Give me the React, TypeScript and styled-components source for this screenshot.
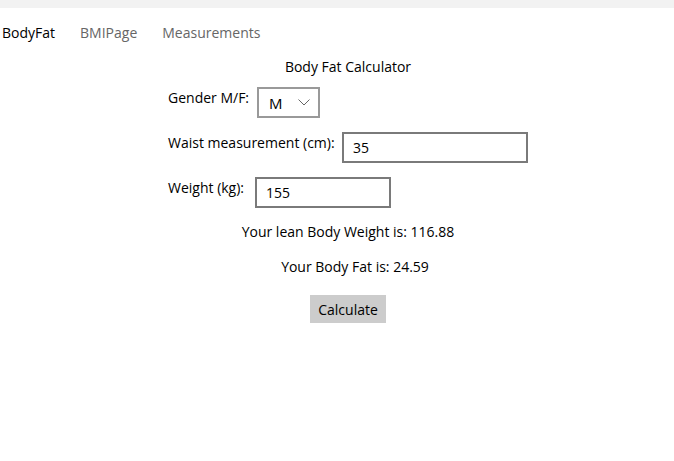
import React from "react";
import styled, { createGlobalStyle } from "styled-components";

const Global = createGlobalStyle`
  html, body { margin: 0; padding: 0; background: #fff; }
  body { font-family: "Open Sans", "Noto Sans", sans-serif; font-size: 14px; color: #000; }
`;

const TopStrip = styled.div`
  height: 8px;
  background: #f2f2f2;
`;

const Tabs = styled.nav`
  display: flex;
  gap: 25px;
  padding: 14px 0 0 2px;
  height: 22px;
`;

const Tab = styled.span<{ $active?: boolean }>`
  font-size: 14px;
  line-height: 22px;
  color: ${(p) => (p.$active ? "#000" : "#666")};
`;

const Page = styled.main`
  display: flex;
  flex-direction: column;
  padding-top: 13px;
`;

const Title = styled.div`
  align-self: center;
  margin-left: 22px;
  line-height: 20px;
`;

const Form = styled.div`
  display: flex;
  flex-direction: column;
  gap: 14px;
  margin: 10px 0 0 168px;
`;

const Row = styled.div`
  display: flex;
  align-items: flex-start;
  gap: 5px;
`;

const Label = styled.span<{ $w: number }>`
  width: ${(p) => p.$w}px;
  white-space: nowrap;
  line-height: 20px;
  margin-top: 1px;
`;

const Combo = styled.div`
  box-sizing: border-box;
  width: 63px;
  height: 31px;
  border: 2px solid #999;
  display: flex;
  align-items: center;
  justify-content: space-between;
  padding: 0 8px 0 10px;
  font-size: 15px;
`;

const TextBox = styled.div<{ $w: number }>`
  box-sizing: border-box;
  width: ${(p) => p.$w}px;
  height: 31px;
  border: 2px solid #7a7a7a;
  display: flex;
  align-items: center;
  padding-left: 9px;
`;

const Result = styled.div<{ $shift: number; $top: number }>`
  align-self: center;
  margin-left: ${(p) => p.$shift}px;
  margin-top: ${(p) => p.$top}px;
  line-height: 20px;
`;

const Button = styled.button`
  align-self: center;
  margin: 18px 0 0 22px;
  background: #cccccc;
  border: none;
  font-family: inherit;
  font-size: 14px;
  color: #000;
  height: 28px;
  padding: 0 8px;
`;

export default function App() {
  return (
    <>
      <Global />
      <TopStrip />
      <Tabs>
        <Tab $active>BodyFat</Tab>
        <Tab>BMIPage</Tab>
        <Tab>Measurements</Tab>
      </Tabs>
      <Page>
        <Title>Body Fat Calculator</Title>
        <Form>
          <Row>
            <Label $w={84}>Gender M/F:</Label>
            <Combo>
              M
              <svg width="12" height="7" viewBox="0 0 12 7">
                <path d="M0.5 0.5 L6 6 L11.5 0.5" fill="none" stroke="#666" strokeWidth="1" />
              </svg>
            </Combo>
          </Row>
          <Row>
            <Label $w={169}>Waist measurement (cm):</Label>
            <TextBox $w={186}>35</TextBox>
          </Row>
          <Row>
            <Label $w={82}>Weight (kg):</Label>
            <TextBox $w={136}>155</TextBox>
          </Row>
        </Form>
        <Result $shift={22} $top={14}>Your lean Body Weight is: 116.88</Result>
        <Result $shift={36} $top={15}>Your Body Fat is: 24.59</Result>
        <Button>Calculate</Button>
      </Page>
    </>
  );
}
